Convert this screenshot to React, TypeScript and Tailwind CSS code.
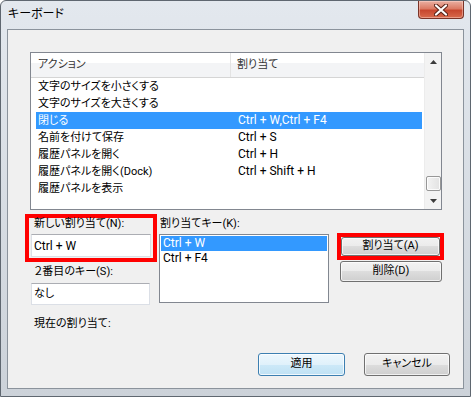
import React from 'react';

const actions = [
  { id: 'smaller', name: '文字のサイズを小さくする', keys: '' },
  { id: 'larger', name: '文字のサイズを大きくする', keys: '' },
  { id: 'close', name: '閉じる', keys: 'Ctrl + W,Ctrl + F4', selected: true },
  { id: 'save-as', name: '名前を付けて保存', keys: 'Ctrl + S' },
  { id: 'history', name: '履歴パネルを開く', keys: 'Ctrl + H' },
  { id: 'history-dock', name: '履歴パネルを開く(Dock)', keys: 'Ctrl + Shift + H' },
  { id: 'history-show', name: '履歴パネルを表示', keys: '' },
];

const buttonClass =
  'flex items-center justify-center rounded-[3px] border border-[#707070] bg-[linear-gradient(to_bottom,#f2f2f2_0%,#ebebeb_50%,#dddddd_50%,#cfcfcf_100%)] shadow-[inset_0_0_0_1px_rgba(255,255,255,0.7)] text-black';

function Arrow(props: { down?: boolean }) {
  return (
    <svg width="7" height="4" viewBox="0 0 7 4">
      {props.down ? (
        <polygon points="0,0 7,0 3.5,4" fill="#3b3b3b" />
      ) : (
        <polygon points="3.5,0 7,4 0,4" fill="#3b3b3b" />
      )}
    </svg>
  );
}

function CloseGlyph() {
  return (
    <svg width="14" height="12" viewBox="0 0 14 12">
      <path d="M2 1.5 L12 10.5 M12 1.5 L2 10.5" stroke="#5a2318" strokeWidth="4.2" strokeLinecap="round" />
      <path d="M2 1.5 L12 10.5 M12 1.5 L2 10.5" stroke="#ffffff" strokeWidth="2.2" strokeLinecap="round" />
    </svg>
  );
}

export default function App() {
  return (
    <div className="w-[471px] h-[397px] bg-white font-[Roboto,'Noto_Sans_CJK_JP',sans-serif] [font-feature-settings:'palt'] text-[11px] text-black">
      <div className="w-[471px] h-[397px] rounded-t-[6px] border border-[#5f6770] bg-[linear-gradient(to_bottom,#e3e8ee,#ccd2d9)] flex flex-col">
        {/* title bar */}
        <div className="h-[28px] flex items-start">
          <div className="pl-[7px] pt-[5px] text-[12px] leading-[17px]">キーボード</div>
          <div className="ml-auto mr-[6px] w-[46px] h-[18px] rounded-b-[4px] border border-t-0 border-[#7a3327] bg-[linear-gradient(to_bottom,#eab0a2_0%,#db7a64_45%,#c7472e_55%,#d86a4c_100%)] shadow-[inset_0_0_0_1px_rgba(255,220,210,0.45)] flex items-center justify-center">
            <CloseGlyph />
          </div>
        </div>

        {/* client area */}
        <div className="ml-[6px] w-[457px] h-[360px] border border-[#8b939c] bg-[#f0f0f0] flex flex-col">
          {/* action list */}
          <div className="mt-[22px] ml-[22px] w-[412px] h-[158px] border border-[#828790] bg-white flex">
            <div className="flex-1 flex flex-col">
              <div className="h-[25px] flex border-b border-[#d5d5d5] bg-[linear-gradient(to_bottom,#ffffff_40%,#f3f4f6_40%)] text-[#333]">
                <div className="w-[200px] pl-[7px] border-r border-[#e3e3e3] flex items-center">アクション</div>
                <div className="pl-[6px] flex items-center">割り当て</div>
              </div>
              {actions.map((item) => (
                <div
                  key={item.id}
                  className={
                    item.selected
                      ? 'h-[17px] leading-[17px] ml-[5px] mr-[2px] flex items-center bg-[#3399ff] text-white'
                      : 'h-[17px] leading-[17px] ml-[5px] mr-[2px] flex items-center'
                  }
                >
                  <div className="w-[195px] pl-[2px] whitespace-nowrap">{item.name}</div>
                  <div className="pl-[7px] text-[12px] whitespace-nowrap">{item.keys}</div>
                </div>
              ))}
            </div>
            <div className="w-[17px] flex flex-col bg-[#f3f3f3] border-l border-[#ececec]">
              <div className="h-[17px] flex items-center justify-center">
                <Arrow />
              </div>
              <div className="flex-1 pt-[106px] pl-[1px]">
                <div className="w-[15px] h-[15px] rounded-[2px] border border-[#979797] bg-[linear-gradient(to_right,#f3f3f3,#e2e2e2)] shadow-[inset_0_0_0_1px_rgba(255,255,255,0.8)]" />
              </div>
              <div className="h-[17px] flex items-center justify-center">
                <Arrow down />
              </div>
            </div>
          </div>

          {/* assignment controls */}
          <div className="mt-[4px] flex items-start">
            <div className="ml-[17px] flex flex-col">
              <div className="w-[132px] h-[48px] border-4 border-[#ff0000] flex flex-col">
                <div className="pl-[5px] leading-[12px] whitespace-nowrap">新しい割り当て(N):</div>
                <div className="mt-[4px] ml-[2px] w-[120px] h-[23px] border border-[#dbdfe6] border-t-[#abadb3] bg-white pl-[2px] text-[12px] flex items-center">
                  Ctrl + W
                </div>
              </div>
              <div className="mt-[4px] ml-[9px] leading-[12px] whitespace-nowrap">２番目のキー(S):</div>
              <div className="mt-[5px] ml-[6px] w-[119px] h-[22px] border border-[#dbdfe6] border-t-[#abadb3] bg-white pl-[2px] flex items-center">
                なし
              </div>
              <div className="mt-[13px] ml-[9px] leading-[12px] whitespace-nowrap">現在の割り当て:</div>
            </div>

            <div className="ml-[2px] flex flex-col">
              <div className="mt-[4px] pl-[1px] leading-[12px] whitespace-nowrap">割り当てキー(K):</div>
              <div className="mt-[4px] w-[170px] h-[69px] border border-[#828790] bg-white p-[1px] flex flex-col text-[12px]">
                <div className="h-[15px] leading-[15px] bg-[#3399ff] text-white pl-[2px] flex items-center">Ctrl + W</div>
                <div className="h-[15px] leading-[15px] pl-[2px] flex items-center">Ctrl + F4</div>
              </div>
            </div>

            <div className="ml-[8px] mt-[19px] flex flex-col">
              <div className="w-[107px] h-[27px] border-4 border-[#ff0000]">
                <div className={buttonClass + ' w-full h-full'}>割り当て(A)</div>
              </div>
              <div className={buttonClass + ' mt-[1px] ml-[3px] w-[102px] h-[21px]'}>削除(D)</div>
            </div>
          </div>

          {/* dialog buttons */}
          <div className="mt-auto mb-[12px] mr-[13px] flex justify-end gap-[19px]">
            <div className="w-[87px] h-[23px] rounded-[3px] border border-[#3c7fb1] bg-[linear-gradient(to_bottom,#edf7fd_0%,#e0f1fb_50%,#cde9f8_50%,#bfe1f4_100%)] shadow-[inset_0_0_0_1px_rgba(255,255,255,0.75)] flex items-center justify-center">
              適用
            </div>
            <div className={buttonClass + ' w-[86px] h-[23px]'}>キャンセル</div>
          </div>
        </div>
      </div>
    </div>
  );
}
